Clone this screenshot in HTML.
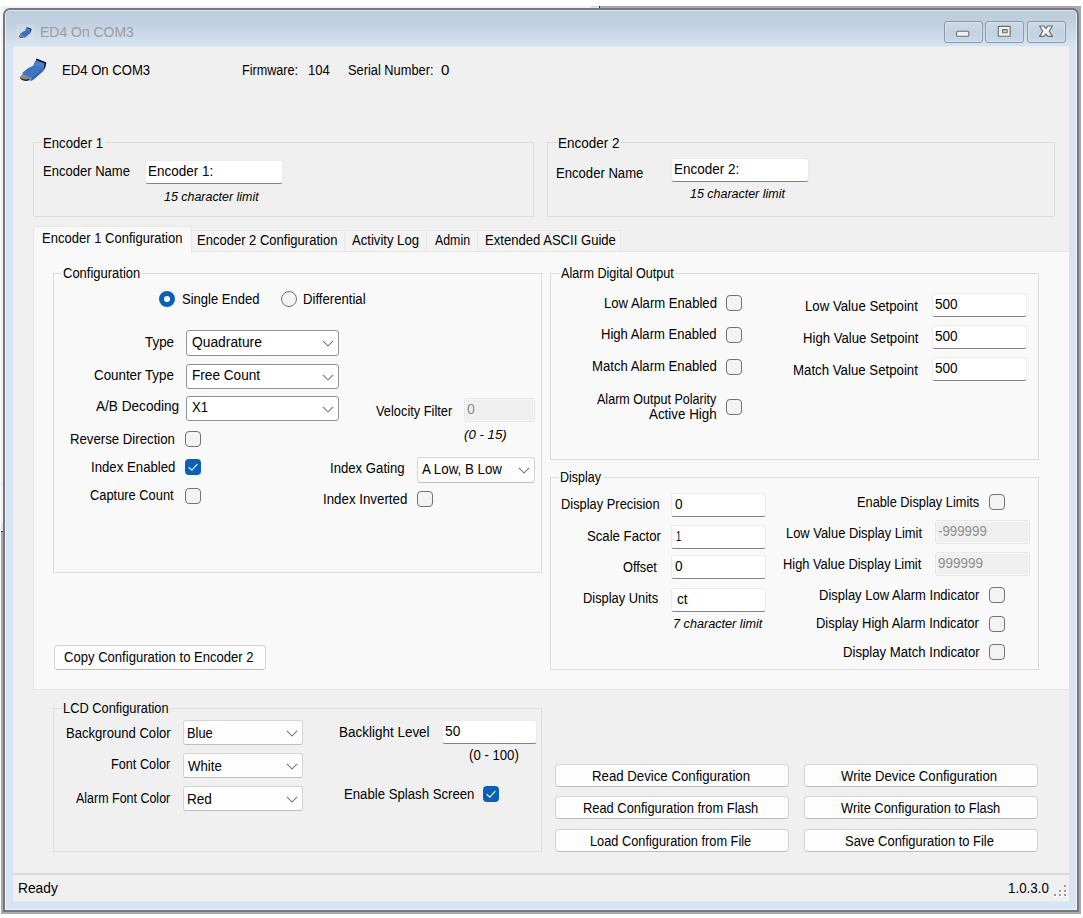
<!DOCTYPE html>
<html lang="en"><head><meta charset="utf-8"><title>ED4 On COM3</title>
<style>
html,body{margin:0;padding:0}
body{width:1083px;height:918px;position:relative;overflow:hidden;background:#fff;font-family:"Liberation Sans",sans-serif;font-size:14px;color:#000}
#root{position:absolute;left:0;top:0;width:1083px;height:918px;overflow:hidden}
.abs{position:absolute}
#win{position:absolute;left:3px;top:8px;width:1076px;height:904px;box-sizing:border-box;border:2px solid #76777b;border-radius:7px 7px 0 0;background:#d7e4f2;overflow:hidden}
#winhl{position:absolute;left:0;top:0;right:0;bottom:0;border:1px solid rgba(255,255,255,.55);border-radius:5px 5px 0 0;box-sizing:border-box}
#cap{position:absolute;left:0;top:0;right:0;height:38px;background:linear-gradient(#bccbdc,#c3d2e2 40%,#d9e5f2)}
#client{position:absolute;left:13px;top:46px;width:1056px;height:856px;box-sizing:border-box;background:#f0f0f0;border-top:1px solid #e5ebf2;border-bottom:1px solid #e4eaf1;overflow:hidden}
#layer{position:absolute;left:0;top:0;width:1083px;height:918px}
.t{position:absolute;white-space:nowrap;line-height:20px;transform-origin:0 50%;display:block}
.grp{position:absolute;box-sizing:border-box;border:1px solid #dcdcdc}
.tabpage{position:absolute;box-sizing:border-box;border:1px solid #e6e6e6;background:#f9f9f9}
.tab{position:absolute;box-sizing:border-box;border:1px solid #e8e8e8;border-bottom:none;background:#f3f3f3}
.tab.sel{background:#f9f9f9;border-color:#e6e6e6;border-radius:2px 2px 0 0}
.cb{position:absolute;width:16px;height:16px;box-sizing:border-box;border:1px solid #727272;border-radius:4px;background:#f3f3f3}
.cb.on{border:none;background:#0a5fb7}
.cb svg{display:block}
.rb{position:absolute;width:16px;height:16px;box-sizing:border-box;border:1px solid #727272;border-radius:50%;background:#f3f3f3}
.rb.on{border:5.2px solid #0a5fb7;background:#fff}
.combo{position:absolute;box-sizing:border-box;border:1px solid #929292;border-radius:3px;background:#fff}
.combo.lt{border-color:#d5d5d5;border-bottom-color:#bebebe;background:#fdfdfd}
.chev{display:block}
.tb{position:absolute;box-sizing:border-box;border:1px solid #ececec;border-bottom:1.6px solid #838383;border-radius:3px;background:#fff}
.tb.dis{border:1px solid #e8e8e8;background:#efefef}
.ring{position:absolute;left:0;top:0;right:0;bottom:0;border:1px solid #f6f6f6;border-radius:2px}
.btn{position:absolute;box-sizing:border-box;border:1px solid #d2d2d2;border-bottom-color:#bcbcbc;border-radius:4px;background:#fdfdfd}
.grip i{position:absolute;width:2px;height:2px;display:block}
.cbtn{position:absolute;top:21px;height:22px;box-sizing:border-box;border:1px solid #8899af;border-radius:3px;background:linear-gradient(#ccd9e8,#c3d2e3 50%,#c9d7e7);box-shadow:inset 0 0 0 1px rgba(255,255,255,.25)}
</style></head>
<body><div id="root">
<!-- backing strips behind window -->
<div class="abs" style="left:1px;top:6px;width:598px;height:4px;background:#f2f2f2"></div>
<div class="abs" style="left:1px;top:6px;width:3px;height:526px;background:#f2f2f2"></div>
<div class="abs" style="left:1px;top:483px;width:3px;height:1px;background:#d4d4d4"></div>
<div class="abs" style="left:590px;top:6px;width:8px;height:3px;background:#d3e3f3"></div>
<div class="abs" style="left:1px;top:522px;width:3px;height:8px;background:#d6e2f0"></div>
<div class="abs" style="left:599px;top:6px;width:482px;height:908px;background:#a9a9a9"></div>
<div class="abs" style="left:1.3px;top:532px;width:600px;height:381.8px;background:#a9a9a9"></div>
<div class="abs" style="left:598.6px;top:6px;width:1.2px;height:3px;background:#2a2a2a"></div>
<div class="abs" style="left:1px;top:530.6px;width:3px;height:1.5px;background:#3a3a3a"></div>
<div id="win"><div id="cap"></div><div id="winhl"></div></div>
<div id="client"></div>
<div id="layer">
<div class="abs" style="left:16px;top:24px;width:19px;height:17px;background:rgba(255,255,255,.10)"></div>
<svg width="19.2" height="19.2" viewBox="0 0 40 40" style="position:absolute;left:15.9px;top:22.6px">
<path d="M22.6 8.9 L32.0 12.7 L30.6 18.6 C29.6 21 27.9 22.4 26.4 23.5 L21.5 27.7 L17.7 30.8 L15.6 30.2 L9.0 25.6 L8.2 22.9 L13.5 18.6 L19.4 15.5 L20.8 12.0 Z" fill="#3d74c0"/>
<path d="M20.8 12 L22.2 10.2 L30.6 13.7 L29.7 18.2 L19.4 15.5 Z" fill="#4b84d1" opacity=".7"/>
<path d="M30.6 18.6 C29.6 21 27.9 22.4 26.4 23.5 L21.5 27.7 L17.7 30.8 L17.5 28.8 L25 22.4 L29.6 18.2 Z" fill="#2a58a0" opacity=".65"/>
<path d="M9 24.4 L15.2 26.6 L15.0 29.9 C13.5 31 11.5 31.2 9.5 30.6 C7.2 29.9 5.6 28.6 5.9 27.3 C6.2 26 7.5 25 9 24.4 Z" fill="#8d8880"/>
<path d="M5.9 27.6 C6.5 29.6 9.5 31 12 30.9 C13.2 30.9 14.3 30.5 15 29.9 L15.1 28.6 C13.5 29.6 11 29.8 8.8 29 C7.4 28.5 6.3 28 5.9 27.6Z" fill="#2b2623"/>
<path d="M15.3 26.6 L17.3 27.4 L17.7 30.8 L15.5 30.2 Z" fill="#5b95e3"/>
<path d="M22.6 8.6 L32.4 12.5 L30.9 18.9 L29.8 18.1 L30.8 13.6 L21.9 10.1 Z" fill="#0a1222"/>
</svg>
<span class="t" style="left:39.75px;top:22px;font-size:15px;transform:scaleX(0.9307);color:#9b9da0;">ED4 On COM3</span>

<div class="cbtn" style="left:944px;width:39px"></div>
<div class="cbtn" style="left:985px;width:39px"></div>
<div class="cbtn" style="left:1027px;width:39px"></div>
<svg class="abs" style="left:940px;top:18px" width="130" height="28" viewBox="940 18 130 28">
<rect x="956.6" y="31.3" width="12.2" height="5" rx="1.2" fill="#f1f1f1" stroke="#676c73" stroke-width="1.1"/>
<path d="M998.3 26.4 h11.8 v9.9 h-11.8z M1002.6 29.6 v3.1 h4.6 v-3.1z" fill="#f1f1f1" fill-rule="evenodd" stroke="#676c73" stroke-width="1.1" stroke-linejoin="round"/>
<path d="M1039.6 26 L1044 26 L1045.9 28.4 L1047.9 26 L1052.4 26 L1049.2 31.2 L1052.4 36.4 L1047.9 36.4 L1045.9 34 L1044 36.4 L1039.6 36.4 L1042.7 31.2 Z" fill="#f4f4f4" stroke="#676c73" stroke-width="1.2" stroke-linejoin="round"/>
</svg>

<svg width="40" height="40" viewBox="0 0 40 40" style="position:absolute;left:14px;top:50px">
<path d="M22.6 8.9 L32.0 12.7 L30.6 18.6 C29.6 21 27.9 22.4 26.4 23.5 L21.5 27.7 L17.7 30.8 L15.6 30.2 L9.0 25.6 L8.2 22.9 L13.5 18.6 L19.4 15.5 L20.8 12.0 Z" fill="#3d74c0"/>
<path d="M20.8 12 L22.2 10.2 L30.6 13.7 L29.7 18.2 L19.4 15.5 Z" fill="#4b84d1" opacity=".7"/>
<path d="M30.6 18.6 C29.6 21 27.9 22.4 26.4 23.5 L21.5 27.7 L17.7 30.8 L17.5 28.8 L25 22.4 L29.6 18.2 Z" fill="#2a58a0" opacity=".65"/>
<path d="M9 24.4 L15.2 26.6 L15.0 29.9 C13.5 31 11.5 31.2 9.5 30.6 C7.2 29.9 5.6 28.6 5.9 27.3 C6.2 26 7.5 25 9 24.4 Z" fill="#8d8880"/>
<path d="M5.9 27.6 C6.5 29.6 9.5 31 12 30.9 C13.2 30.9 14.3 30.5 15 29.9 L15.1 28.6 C13.5 29.6 11 29.8 8.8 29 C7.4 28.5 6.3 28 5.9 27.6Z" fill="#2b2623"/>
<path d="M15.3 26.6 L17.3 27.4 L17.7 30.8 L15.5 30.2 Z" fill="#5b95e3"/>
<path d="M22.6 8.6 L32.4 12.5 L30.9 18.9 L29.8 18.1 L30.8 13.6 L21.9 10.1 Z" fill="#0a1222"/>
</svg>
<span class="t" style="left:61.52px;top:60px;transform:scaleX(0.9365);">ED4 On COM3</span>
<span class="t" style="left:241.86px;top:60px;transform:scaleX(0.9011);">Firmware:</span>
<span class="t" style="left:308.22px;top:60px;transform:scaleX(0.9356);">104</span>
<span class="t" style="left:348.02px;top:60px;transform:scaleX(0.9159);">Serial Number:</span>
<span class="t" style="left:441.00px;top:60px;transform:scaleX(1.0770);">0</span>
<div class="grp" style="left:33.0px;top:142.0px;width:501.0px;height:75.0px;"></div>
<div class="" style="left:42.0px;top:140.0px;width:63.0px;height:6.0px;position:absolute;background:#f0f0f0;"></div>
<span class="t" style="left:43.31px;top:133px;transform:scaleX(0.9406);">Encoder 1</span>
<span class="t" style="left:43.32px;top:161px;transform:scaleX(0.9309);">Encoder Name</span>
<div class="tb" style="left:145.0px;top:160.0px;width:138.0px;height:24.0px;"></div>
<span class="t" style="left:147.89px;top:161px;transform:scaleX(0.9621);">Encoder 1:</span>
<span class="t" style="left:164.29px;top:187px;font-size:12.5px;transform:scaleX(0.9949);font-style:italic;">15 character limit</span>
<div class="grp" style="left:547.0px;top:142.0px;width:508.0px;height:75.0px;"></div>
<div class="" style="left:557.0px;top:140.0px;width:64.0px;height:6.0px;position:absolute;background:#f0f0f0;"></div>
<span class="t" style="left:557.59px;top:133px;transform:scaleX(0.9621);">Encoder 2</span>
<span class="t" style="left:556.42px;top:163px;transform:scaleX(0.9353);">Encoder Name</span>
<div class="tb" style="left:671.0px;top:158.0px;width:138.0px;height:24.0px;"></div>
<span class="t" style="left:674.29px;top:159px;transform:scaleX(0.9621);">Encoder 2:</span>
<span class="t" style="left:689.99px;top:184px;font-size:12.5px;transform:scaleX(0.9970);font-style:italic;">15 character limit</span>
<div class="tabpage" style="left:33.0px;top:251.0px;width:1036.0px;height:439.0px;border-right:none;"></div>
<div class="tab" style="left:191.0px;top:230.0px;width:154.0px;height:21.0px;"></div>
<span class="t" style="left:196.53px;top:230px;transform:scaleX(0.9298);">Encoder 2 Configuration</span>
<div class="tab" style="left:344.0px;top:230.0px;width:83.0px;height:21.0px;"></div>
<span class="t" style="left:352.27px;top:230px;transform:scaleX(0.9354);">Activity Log</span>
<div class="tab" style="left:426.0px;top:230.0px;width:52.0px;height:21.0px;"></div>
<span class="t" style="left:434.57px;top:230px;transform:scaleX(0.8827);">Admin</span>
<div class="tab" style="left:477.0px;top:230.0px;width:144.0px;height:21.0px;"></div>
<span class="t" style="left:485.02px;top:230px;transform:scaleX(0.9341);">Extended ASCII Guide</span>
<div class="tab sel" style="left:33.0px;top:226.0px;width:159.0px;height:27.0px;"></div>
<span class="t" style="left:41.93px;top:228px;transform:scaleX(0.9305);">Encoder 1 Configuration</span>
<div class="grp" style="left:53.0px;top:273.0px;width:489.0px;height:300.0px;"></div>
<div class="" style="left:61.0px;top:271.0px;width:81.0px;height:6.0px;position:absolute;background:#f9f9f9;"></div>
<span class="t" style="left:62.55px;top:263px;transform:scaleX(0.9279);">Configuration</span>
<div class="rb on" style="left:159.0px;top:291.0px"></div>
<span class="t" style="left:182.41px;top:289px;transform:scaleX(0.9295);">Single Ended</span>
<div class="rb" style="left:281.0px;top:291.0px"></div>
<span class="t" style="left:303.12px;top:289px;transform:scaleX(0.9384);">Differential</span>
<span class="t" style="left:144.90px;top:332px;transform:scaleX(0.9580);">Type</span>
<div class="combo" style="left:186.0px;top:330.0px;width:153.0px;height:26.0px;"></div>
<div style="position:absolute;left:321.7px;top:340.0px;width:12px;height:8px"><svg class="chev" width="12" height="8" viewBox="0 0 12 8"><path d="M1.2 1.2 L6 6.0 L10.8 1.2" fill="none" stroke="#707070" stroke-width="1.05" stroke-linecap="round" stroke-linejoin="round"/></svg></div>
<span class="t" style="left:192.24px;top:332px;transform:scaleX(0.9864);">Quadrature</span>
<span class="t" style="left:94.13px;top:365px;transform:scaleX(0.9528);">Counter Type</span>
<div class="combo" style="left:186.0px;top:364.0px;width:153.0px;height:25.0px;"></div>
<div style="position:absolute;left:321.7px;top:373.5px;width:12px;height:8px"><svg class="chev" width="12" height="8" viewBox="0 0 12 8"><path d="M1.2 1.2 L6 6.0 L10.8 1.2" fill="none" stroke="#707070" stroke-width="1.05" stroke-linecap="round" stroke-linejoin="round"/></svg></div>
<span class="t" style="left:191.98px;top:365px;transform:scaleX(0.9727);">Free Count</span>
<span class="t" style="left:95.57px;top:396px;transform:scaleX(0.9717);">A/B Decoding</span>
<div class="combo" style="left:186.0px;top:396.0px;width:153.0px;height:25.0px;"></div>
<div style="position:absolute;left:321.7px;top:405.5px;width:12px;height:8px"><svg class="chev" width="12" height="8" viewBox="0 0 12 8"><path d="M1.2 1.2 L6 6.0 L10.8 1.2" fill="none" stroke="#707070" stroke-width="1.05" stroke-linecap="round" stroke-linejoin="round"/></svg></div>
<span class="t" style="left:191.91px;top:397px;transform:scaleX(0.9359);">X1</span>
<span class="t" style="left:375.54px;top:401px;transform:scaleX(0.9162);">Velocity Filter</span>
<div class="tb dis" style="left:464.0px;top:398.0px;width:71.0px;height:24.0px;"><div class="ring"></div></div>
<span class="t" style="left:467.23px;top:399px;transform:scaleX(1.0172);color:#8e8e8e;">0</span>
<span class="t" style="left:463.87px;top:425px;font-size:12.5px;transform:scaleX(1.0607);font-style:italic;">(0 - 15)</span>
<span class="t" style="left:70.01px;top:429px;transform:scaleX(0.9429);">Reverse Direction</span>
<div class="cb" style="left:185.0px;top:431.0px"></div>
<span class="t" style="left:90.58px;top:457px;transform:scaleX(0.9436);">Index Enabled</span>
<div class="cb on" style="left:185.0px;top:459.0px"><svg width="16" height="16" viewBox="0 0 16 16"><path d="M3.9 8.5 L6.9 11.2 L12.1 5.3" fill="none" stroke="#f2f7fc" stroke-width="1.1" stroke-linecap="round" stroke-linejoin="round"/></svg></div>
<span class="t" style="left:90.46px;top:485px;transform:scaleX(0.9184);">Capture Count</span>
<div class="cb" style="left:185.0px;top:488.0px"></div>
<span class="t" style="left:330.18px;top:458px;transform:scaleX(0.9403);">Index Gating</span>
<div class="combo lt" style="left:417.0px;top:457.0px;width:118.0px;height:26.0px;"></div>
<div style="position:absolute;left:517.7px;top:467.0px;width:12px;height:8px"><svg class="chev" width="12" height="8" viewBox="0 0 12 8"><path d="M1.2 1.2 L6 6.0 L10.8 1.2" fill="none" stroke="#707070" stroke-width="1.05" stroke-linecap="round" stroke-linejoin="round"/></svg></div>
<span class="t" style="left:422.17px;top:459px;transform:scaleX(0.9516);">A Low, B Low</span>
<span class="t" style="left:322.87px;top:489px;transform:scaleX(0.9508);">Index Inverted</span>
<div class="cb" style="left:417.0px;top:491.0px"></div>
<div class="btn" style="left:54.0px;top:645.0px;width:212.0px;height:25.0px;"></div>
<span class="t" style="left:63.75px;top:647px;transform:scaleX(0.9335);">Copy Configuration to Encoder 2</span>
<div class="grp" style="left:550.0px;top:273.0px;width:489.0px;height:187.0px;"></div>
<div class="" style="left:559.0px;top:271.0px;width:117.0px;height:6.0px;position:absolute;background:#f9f9f9;"></div>
<span class="t" style="left:560.97px;top:263px;transform:scaleX(0.9007);">Alarm Digital Output</span>
<span class="t" style="left:603.72px;top:293px;transform:scaleX(0.9361);">Low Alarm Enabled</span>
<div class="cb" style="left:726.0px;top:295.0px"></div>
<span class="t" style="left:601.22px;top:324px;transform:scaleX(0.9327);">High Alarm Enabled</span>
<div class="cb" style="left:726.0px;top:327.0px"></div>
<span class="t" style="left:591.82px;top:356px;transform:scaleX(0.9379);">Match Alarm Enabled</span>
<div class="cb" style="left:726.0px;top:359.0px"></div>
<span class="t" style="left:596.57px;top:389px;transform:scaleX(0.8965);">Alarm Output Polarity</span>
<span class="t" style="left:648.97px;top:404px;transform:scaleX(0.9557);">Active High</span>
<div class="cb" style="left:726.0px;top:399.0px"></div>
<span class="t" style="left:805.11px;top:296px;transform:scaleX(0.9439);">Low Value Setpoint</span>
<div class="tb" style="left:932.0px;top:293.0px;width:95.0px;height:24.0px;"></div>
<span class="t" style="left:934.86px;top:294px;transform:scaleX(0.9704);">500</span>
<span class="t" style="left:802.61px;top:328px;transform:scaleX(0.9403);">High Value Setpoint</span>
<div class="tb" style="left:932.0px;top:325.0px;width:95.0px;height:24.0px;"></div>
<span class="t" style="left:934.86px;top:326px;transform:scaleX(0.9704);">500</span>
<span class="t" style="left:793.11px;top:360px;transform:scaleX(0.9458);">Match Value Setpoint</span>
<div class="tb" style="left:932.0px;top:357.0px;width:95.0px;height:24.0px;"></div>
<span class="t" style="left:934.86px;top:358px;transform:scaleX(0.9704);">500</span>
<div class="grp" style="left:550.0px;top:477.0px;width:489.0px;height:193.0px;"></div>
<div class="" style="left:559.0px;top:475.0px;width:45.0px;height:6.0px;position:absolute;background:#f9f9f9;"></div>
<span class="t" style="left:560.17px;top:467px;transform:scaleX(0.8920);">Display</span>
<span class="t" style="left:561.34px;top:494px;transform:scaleX(0.9191);">Display Precision</span>
<div class="tb" style="left:671.0px;top:493.0px;width:95.0px;height:24.0px;"></div>
<span class="t" style="left:674.86px;top:494px;transform:scaleX(0.9723);">0</span>
<span class="t" style="left:587.31px;top:526px;transform:scaleX(0.9404);">Scale Factor</span>
<div class="tb" style="left:671.0px;top:525.0px;width:95.0px;height:24.0px;"></div>
<span class="t" style="left:675.51px;top:526px;transform:scaleX(0.6606);">1</span>
<span class="t" style="left:623.39px;top:557px;transform:scaleX(0.9138);">Offset</span>
<div class="tb" style="left:671.0px;top:555.0px;width:95.0px;height:24.0px;"></div>
<span class="t" style="left:674.86px;top:556px;transform:scaleX(0.9723);">0</span>
<span class="t" style="left:583.34px;top:588px;transform:scaleX(0.9195);">Display Units</span>
<div class="tb" style="left:671.0px;top:588.0px;width:95.0px;height:24.0px;"></div>
<span class="t" style="left:677.12px;top:589px;transform:scaleX(0.9720);">ct</span>
<span class="t" style="left:673.40px;top:614px;font-size:12.5px;transform:scaleX(1.0129);font-style:italic;">7 character limit</span>
<span class="t" style="left:857.05px;top:492px;transform:scaleX(0.9130);">Enable Display Limits</span>
<div class="cb" style="left:989.0px;top:494.0px"></div>
<span class="t" style="left:785.64px;top:523px;transform:scaleX(0.9219);">Low Value Display Limit</span>
<div class="tb dis" style="left:935.0px;top:520.0px;width:95.0px;height:24.0px;"><div class="ring"></div></div>
<span class="t" style="left:938.00px;top:521px;transform:scaleX(0.9497);color:#8e8e8e;">-999999</span>
<span class="t" style="left:783.44px;top:554px;transform:scaleX(0.9176);">High Value Display Limit</span>
<div class="tb dis" style="left:935.0px;top:552.0px;width:95.0px;height:24.0px;"><div class="ring"></div></div>
<span class="t" style="left:938.36px;top:553px;transform:scaleX(0.9605);color:#8e8e8e;">999999</span>
<span class="t" style="left:818.83px;top:585px;transform:scaleX(0.9285);">Display Low Alarm Indicator</span>
<div class="cb" style="left:989.0px;top:587.0px"></div>
<span class="t" style="left:816.33px;top:613px;transform:scaleX(0.9262);">Display High Alarm Indicator</span>
<div class="cb" style="left:989.0px;top:616.0px"></div>
<span class="t" style="left:842.51px;top:642px;transform:scaleX(0.9394);">Display Match Indicator</span>
<div class="cb" style="left:989.0px;top:644.0px"></div>
<div class="grp" style="left:53.0px;top:708.0px;width:489.0px;height:144.0px;"></div>
<div class="" style="left:62.0px;top:706.0px;width:109.0px;height:6.0px;position:absolute;background:#f0f0f0;"></div>
<span class="t" style="left:63.14px;top:698px;transform:scaleX(0.9167);">LCD Configuration</span>
<span class="t" style="left:65.62px;top:723px;transform:scaleX(0.9340);">Background Color</span>
<div class="combo lt" style="left:183.0px;top:720.0px;width:120.0px;height:25.0px;"></div>
<div style="position:absolute;left:285.7px;top:729.5px;width:12px;height:8px"><svg class="chev" width="12" height="8" viewBox="0 0 12 8"><path d="M1.2 1.2 L6 6.0 L10.8 1.2" fill="none" stroke="#707070" stroke-width="1.05" stroke-linecap="round" stroke-linejoin="round"/></svg></div>
<span class="t" style="left:187.14px;top:723px;transform:scaleX(0.9181);">Blue</span>
<span class="t" style="left:111.25px;top:754px;transform:scaleX(0.9065);">Font Color</span>
<div class="combo lt" style="left:183.0px;top:753.0px;width:120.0px;height:25.0px;"></div>
<div style="position:absolute;left:285.7px;top:762.5px;width:12px;height:8px"><svg class="chev" width="12" height="8" viewBox="0 0 12 8"><path d="M1.2 1.2 L6 6.0 L10.8 1.2" fill="none" stroke="#707070" stroke-width="1.05" stroke-linecap="round" stroke-linejoin="round"/></svg></div>
<span class="t" style="left:187.83px;top:756px;transform:scaleX(0.9429);">White</span>
<span class="t" style="left:76.07px;top:788px;transform:scaleX(0.8905);">Alarm Font Color</span>
<div class="combo lt" style="left:183.0px;top:786.0px;width:120.0px;height:25.0px;"></div>
<div style="position:absolute;left:285.7px;top:795.5px;width:12px;height:8px"><svg class="chev" width="12" height="8" viewBox="0 0 12 8"><path d="M1.2 1.2 L6 6.0 L10.8 1.2" fill="none" stroke="#707070" stroke-width="1.05" stroke-linecap="round" stroke-linejoin="round"/></svg></div>
<span class="t" style="left:187.08px;top:789px;transform:scaleX(0.9693);">Red</span>
<span class="t" style="left:339.09px;top:722px;transform:scaleX(0.9622);">Backlight Level</span>
<div class="tb" style="left:442.0px;top:720.0px;width:95.0px;height:24.0px;"></div>
<span class="t" style="left:445.05px;top:721px;transform:scaleX(0.9824);">50</span>
<span class="t" style="left:469.18px;top:745px;transform:scaleX(0.9413);">(0 - 100)</span>
<span class="t" style="left:343.71px;top:784px;transform:scaleX(0.9414);">Enable Splash Screen</span>
<div class="cb on" style="left:483.0px;top:786.0px"><svg width="16" height="16" viewBox="0 0 16 16"><path d="M3.9 8.5 L6.9 11.2 L12.1 5.3" fill="none" stroke="#f2f7fc" stroke-width="1.1" stroke-linecap="round" stroke-linejoin="round"/></svg></div>
<div class="btn" style="left:555.0px;top:764.0px;width:234.0px;height:23.0px;"></div>
<span class="t" style="left:591.81px;top:766px;transform:scaleX(0.9445);">Read Device Configuration</span>
<div class="btn" style="left:555.0px;top:796.0px;width:234.0px;height:23.0px;"></div>
<span class="t" style="left:583.04px;top:798px;transform:scaleX(0.9193);">Read Configuration from Flash</span>
<div class="btn" style="left:555.0px;top:829.0px;width:234.0px;height:23.0px;"></div>
<span class="t" style="left:589.55px;top:831px;transform:scaleX(0.9125);">Load Configuration from File</span>
<div class="btn" style="left:804.0px;top:764.0px;width:234.0px;height:23.0px;"></div>
<span class="t" style="left:840.53px;top:766px;transform:scaleX(0.9383);">Write Device Configuration</span>
<div class="btn" style="left:804.0px;top:796.0px;width:234.0px;height:23.0px;"></div>
<span class="t" style="left:840.54px;top:798px;transform:scaleX(0.9193);">Write Configuration to Flash</span>
<div class="btn" style="left:804.0px;top:829.0px;width:234.0px;height:23.0px;"></div>
<span class="t" style="left:844.82px;top:831px;transform:scaleX(0.9246);">Save Configuration to File</span>
<div class="" style="left:13.0px;top:873.0px;width:1057.0px;height:2.0px;position:absolute;background:#d9d9d9;"></div>
<span class="t" style="left:17.76px;top:878px;font-size:15px;transform:scaleX(0.9174);">Ready</span>
<span class="t" style="left:1007.70px;top:878px;font-size:15px;transform:scaleX(0.8896);">1.0.3.0</span>
<div class="grip"><i style="left:1064.8px;top:885.6px;background:#fff"></i><i style="left:1063.8px;top:884.6px;background:#9a9a9a"></i><i style="left:1059.8px;top:890.5px;background:#fff"></i><i style="left:1058.8px;top:889.5px;background:#9a9a9a"></i><i style="left:1064.8px;top:890.5px;background:#fff"></i><i style="left:1063.8px;top:889.5px;background:#9a9a9a"></i><i style="left:1054.9px;top:895.4px;background:#fff"></i><i style="left:1053.9px;top:894.4px;background:#9a9a9a"></i><i style="left:1059.8px;top:895.4px;background:#fff"></i><i style="left:1058.8px;top:894.4px;background:#9a9a9a"></i><i style="left:1064.8px;top:895.4px;background:#fff"></i><i style="left:1063.8px;top:894.4px;background:#9a9a9a"></i></div>
</div>
</div></body></html>
